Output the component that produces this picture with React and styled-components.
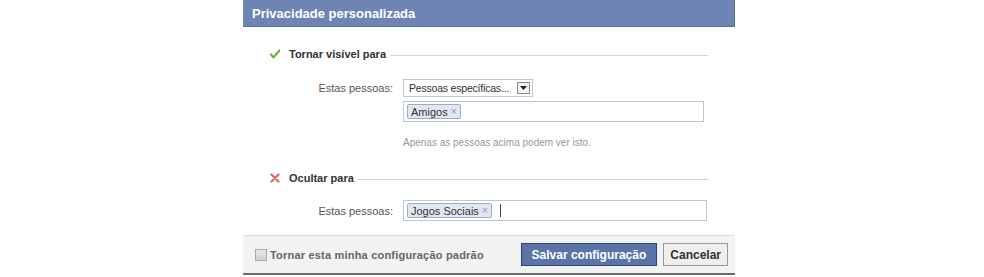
import React from 'react';
import styled, {createGlobalStyle} from 'styled-components';

const GlobalStyle = createGlobalStyle`
    body {
        margin: 0;
        background: #fff;
        font-family: "Liberation Sans", Tahoma, sans-serif;
    }
`;

const Page = styled.div`
    width: 984px;
    height: 277px;
    padding-left: 243px;
    box-sizing: border-box;
`;

const Dialog = styled.div`
    width: 492px;
    border-bottom: 2px solid #6b6b6b;
`;

const Header = styled.div`
    height: 26px;
    background: #6d84b4;
    border-right: 1px solid #5a6fa0;
    border-bottom: 1px solid #5a6fa0;
    color: #fff;
    font-weight: bold;
    font-size: 13px;
    display: flex;
    align-items: center;
    padding-left: 9px;
`;

const Body = styled.div`
    padding: 18px 27px 14px 27px;
`;

const SectionHead = styled.div`
    display: flex;
    align-items: center;
    height: 18px;
    margin-top: ${p => p.$top || 0}px;
    font-size: 11px;
    font-weight: bold;
    color: #333;
`;

const HeadIcon = styled.span`
    width: 10px;
    height: 10px;
    margin-right: 9px;
    display: flex;
`;

const Rule = styled.div`
    flex: 1;
    height: 1px;
    background: #d4d4d4;
    margin-left: 4px;
    margin-top: 2px;
`;

const Row = styled.div`
    display: grid;
    grid-template-columns: 123px 1fr;
    column-gap: 10px;
    align-items: center;
    margin-top: ${p => p.$top || 0}px;
`;

const Label = styled.div`
    text-align: right;
    font-size: 11px;
    color: #555;
`;

const Select = styled.div`
    width: 130px;
    height: 18px;
    box-sizing: border-box;
    border: 1px solid #bdc7d8;
    display: flex;
    align-items: center;
    justify-content: space-between;
    padding: 0 2px 0 5px;
    font-size: 10.5px;
    letter-spacing: -0.2px;
    white-space: nowrap;
    color: #333;
`;

const DropBtn = styled.span`
    width: 13px;
    height: 12px;
    flex-shrink: 0;
    box-sizing: border-box;
    border: 1px solid #8a8a8a;
    background: #f4f4f4;
    display: flex;
    align-items: center;
    justify-content: center;
`;

const TokenBox = styled.div`
    width: ${p => p.$w}px;
    height: 21px;
    box-sizing: border-box;
    border: 1px solid #bdc7d8;
    display: flex;
    align-items: center;
    padding-left: 3px;
    gap: 8px;
    grid-column: ${p => p.$col || 'auto'};
    margin-top: ${p => p.$top || 0}px;
`;

const Token = styled.span`
    height: 15px;
    box-sizing: border-box;
    border: 1px solid #9daccc;
    background: #e2e6f0;
    border-radius: 2px;
    padding: 0 3px;
    display: flex;
    align-items: center;
    gap: 3px;
    font-size: 11px;
    color: #333;
`;

const TokenX = styled.span`
    color: #8a99bb;
    font-size: 10px;
`;

const Caret = styled.span`
    width: 1px;
    height: 13px;
    background: #444;
`;

const Helper = styled.div`
    grid-column: 2;
    margin-top: 15px;
    font-size: 10px;
    color: #999;
`;

const Footer = styled.div`
    height: 37px;
    background: #f2f2f2;
    border-top: 1px solid #dcdcdc;
    display: flex;
    align-items: center;
    padding: 0 7px 0 12px;
`;

const CheckLabel = styled.label`
    display: flex;
    align-items: center;
    gap: 3px;
    font-size: 11px;
    font-weight: bold;
    letter-spacing: 0.2px;
    color: #666;
    flex: 1;
`;

const Box = styled.span`
    width: 12px;
    height: 12px;
    box-sizing: border-box;
    border: 1px solid #a9a9a9;
    background: linear-gradient(#e6e6e6, #d2d2d2);
`;

const Button = styled.button`
    height: 23px;
    margin-left: 6px;
    padding: 0 ${p => p.$pad}px;
    font-family: "Liberation Sans", Tahoma, sans-serif;
    font-size: 12px;
    font-weight: bold;
    border: 1px solid ${p => p.$primary ? '#29447e' : '#999'};
    background: ${p => p.$primary ? '#5b74a8' : '#eeeeee'};
    color: ${p => p.$primary ? '#fff' : '#333'};
`;

const Check = () => (
    <svg width="10" height="10" viewBox="0 0 10 10">
        <path d="M0.8 5.4 L3.6 8.4 L9.4 1.4" stroke="#6cb33f" strokeWidth="2.2" fill="none" strokeLinecap="round" strokeLinejoin="round"/>
    </svg>
);

const Cross = () => (
    <svg width="10" height="10" viewBox="0 0 10 10">
        <path d="M1.5 1.5 L8.5 8.5 M8.5 1.5 L1.5 8.5" stroke="#e06b73" strokeWidth="2.4" strokeLinecap="round"/>
    </svg>
);

const Arrow = () => (
    <svg width="7" height="4" viewBox="0 0 7 4">
        <path d="M0 0 H7 L3.5 4 Z" fill="#222"/>
    </svg>
);

export default function App() {
    return (
        <Page>
            <GlobalStyle/>
            <Dialog>
                <Header>Privacidade personalizada</Header>
                <Body>
                    <SectionHead>
                        <HeadIcon><Check/></HeadIcon>
                        Tornar visível para
                        <Rule/>
                    </SectionHead>
                    <Row $top={16}>
                        <Label>Estas pessoas:</Label>
                        <Select>
                            Pessoas específicas...
                            <DropBtn><Arrow/></DropBtn>
                        </Select>
                        <TokenBox $w={301} $col={2} $top={4}>
                            <Token>Amigos <TokenX>×</TokenX></Token>
                        </TokenBox>
                        <Helper>Apenas as pessoas acima podem ver isto.</Helper>
                    </Row>
                    <SectionHead $top={21}>
                        <HeadIcon><Cross/></HeadIcon>
                        Ocultar para
                        <Rule/>
                    </SectionHead>
                    <Row $top={13}>
                        <Label>Estas pessoas:</Label>
                        <TokenBox $w={304}>
                            <Token>Jogos Sociais <TokenX>×</TokenX></Token>
                            <Caret/>
                        </TokenBox>
                    </Row>
                </Body>
                <Footer>
                    <CheckLabel><Box/>Tornar esta minha configuração padrão</CheckLabel>
                    <Button $primary $pad={10}>Salvar configuração</Button>
                    <Button $pad={6}>Cancelar</Button>
                </Footer>
            </Dialog>
        </Page>
    );
}
